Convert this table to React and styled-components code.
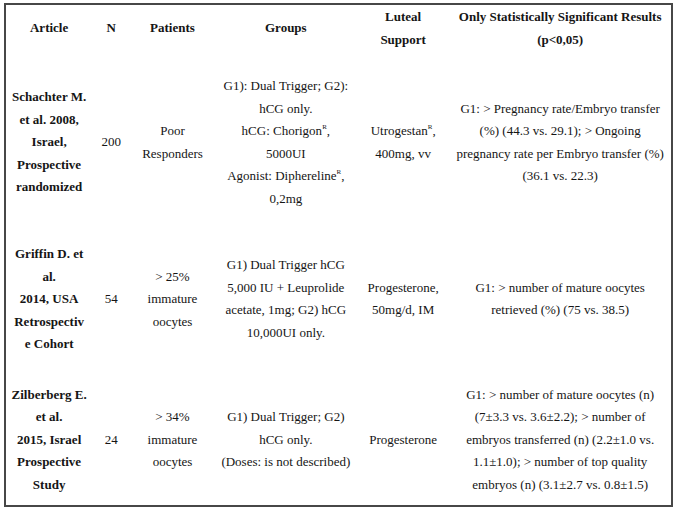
import styled, { createGlobalStyle } from 'styled-components';

const GlobalStyle = createGlobalStyle`
  body {
    margin: 0;
    background: #ffffff;
    font-family: "Liberation Serif", "Times New Roman", serif;
    color: #151515;
  }
`;

const Page = styled.div`
  padding: 3px 0 0 4px;
`;

const Table = styled.table`
  width: 669px;
  border-collapse: collapse;
  table-layout: fixed;
  border: 2px solid #474747;
  font-family: "Liberation Serif", "Times New Roman", serif;
  font-size: 13px;
  line-height: 22.5px;
  color: #151515;
`;

const Col = styled.col`
  width: ${(p) => p.$w}px;
`;

const Row = styled.tr`
  & > th,
  & > td {
    padding-top: ${(p) => p.$top}px;
    padding-bottom: ${(p) => p.$bottom}px;
  }
`;

const Head = styled.th`
  padding: 0;
  font-family: "Liberation Serif", "Times New Roman", serif;
  font-weight: 700;
  text-align: center;
  vertical-align: middle;
`;

const Cell = styled.td`
  padding: 0;
  font-family: "Liberation Serif", "Times New Roman", serif;
  text-align: center;
  vertical-align: middle;
  font-weight: ${(p) => (p.$bold ? 700 : 400)};
`;

const Sup = styled.sup`
  font-size: 7px;
  line-height: 0;
  vertical-align: 6px;
`;

const rows = [
  {
    pad: [12, 16],
    article: ['Schachter M.', 'et al. 2008,', 'Israel,', 'Prospective', 'randomized'],
    n: '200',
    patients: ['Poor', 'Responders'],
    groups: [
      'G1): Dual Trigger; G2):',
      'hCG only.',
      <>hCG: Chorigon<Sup>R</Sup>,</>,
      '5000UI',
      <>Agonist: Diphereline<Sup>R</Sup>,</>,
      '0,2mg',
    ],
    luteal: [<>Utrogestan<Sup>R</Sup>,</>, '400mg, vv'],
    results: [
      'G1: > Pregnancy rate/Embryo transfer',
      '(%) (44.3 vs. 29.1); > Ongoing',
      'pregnancy rate per Embryo transfer (%)',
      '(36.1 vs. 22.3)',
    ],
  },
  {
    pad: [17, 14],
    article: ['Griffin D. et', 'al.', '2014, USA', 'Retrospectiv', 'e Cohort'],
    n: '54',
    patients: ['> 25%', 'immature', 'oocytes'],
    groups: [
      'G1) Dual Trigger hCG',
      '5,000 IU + Leuprolide',
      'acetate, 1mg; G2) hCG',
      '10,000UI only.',
    ],
    luteal: ['Progesterone,', '50mg/d, IM'],
    results: ['G1: > number of mature oocytes', 'retrieved (%) (75 vs. 38.5)'],
  },
  {
    pad: [14, 9],
    article: ['Zilberberg E.', 'et al.', '2015, Israel', 'Prospective', 'Study'],
    n: '24',
    patients: ['> 34%', 'immature', 'oocytes'],
    groups: ['G1) Dual Trigger; G2)', 'hCG only.', '(Doses: is not described)'],
    luteal: ['Progesterone'],
    results: [
      'G1: > number of mature oocytes (n)',
      '(7±3.3 vs. 3.6±2.2); > number of',
      'embryos transferred (n) (2.2±1.0 vs.',
      '1.1±1.0); > number of top quality',
      'embryos (n) (3.1±2.7 vs. 0.8±1.5)',
    ],
  },
];

function Lines({ items }) {
  return items.map((line, i) => (
    <span key={i}>
      {i > 0 && <br />}
      {line}
    </span>
  ));
}

export default function App() {
  return (
    <Page>
      <GlobalStyle />
      <Table>
        <colgroup>
          <Col $w={87} />
          <Col $w={38} />
          <Col $w={84} />
          <Col $w={142} />
          <Col $w={92} />
          <Col $w={222} />
        </colgroup>
        <thead>
          <Row $top={1} $bottom={12}>
            <Head>Article</Head>
            <Head>N</Head>
            <Head>Patients</Head>
            <Head>Groups</Head>
            <Head>
              Luteal
              <br />
              Support
            </Head>
            <Head>
              Only Statistically Significant Results
              <br />
              (p&lt;0,05)
            </Head>
          </Row>
        </thead>
        <tbody>
          {rows.map((r, i) => (
            <Row key={i} $top={r.pad[0]} $bottom={r.pad[1]}>
              <Cell $bold>
                <Lines items={r.article} />
              </Cell>
              <Cell>{r.n}</Cell>
              <Cell>
                <Lines items={r.patients} />
              </Cell>
              <Cell>
                <Lines items={r.groups} />
              </Cell>
              <Cell>
                <Lines items={r.luteal} />
              </Cell>
              <Cell>
                <Lines items={r.results} />
              </Cell>
            </Row>
          ))}
        </tbody>
      </Table>
    </Page>
  );
}
